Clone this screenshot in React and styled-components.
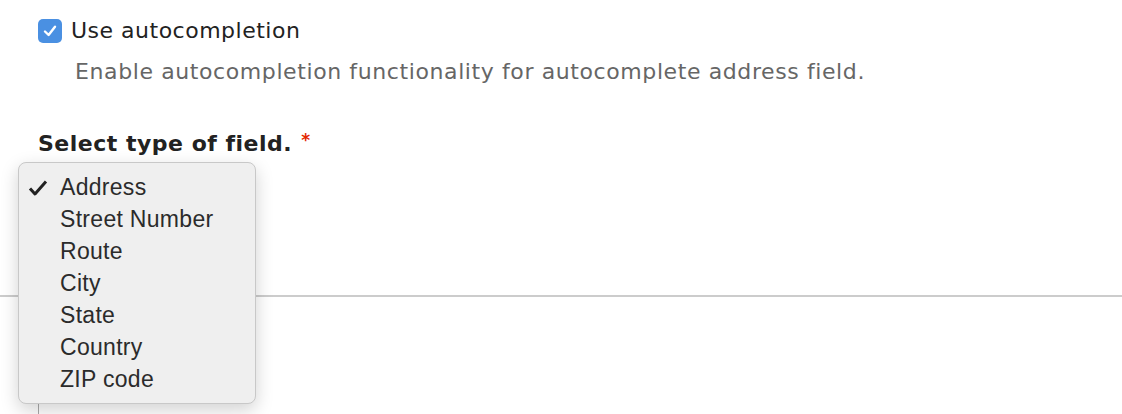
import { createGlobalStyle, styled } from 'styled-components';

const GlobalStyle = createGlobalStyle`
  html, body {
    margin: 0;
    padding: 0;
    background: #fff;
  }
  body {
    font-family: 'DejaVu Sans', 'Liberation Sans', sans-serif;
    color: #222;
  }
`;

const Page = styled.div`
  position: relative;
  width: 1122px;
  height: 414px;
  overflow: hidden;
  padding: 18px 0 0 38px;
  box-sizing: border-box;
`;

const CheckRow = styled.label`
  display: flex;
  align-items: center;
  gap: 9px;
  font-size: 22px;
  letter-spacing: 0.5px;
  line-height: 25px;
  color: #222;
`;

const CheckBox = styled.span`
  width: 24px;
  height: 24px;
  border-radius: 5px;
  background: #4a90e2;
  display: flex;
  align-items: center;
  justify-content: center;
  flex: none;
`;

const Description = styled.p`
  margin: 17px 0 0 37px;
  font-size: 22px;
  letter-spacing: 0.6px;
  line-height: 24px;
  color: #666;
`;

const FieldLabel = styled.h4`
  margin: 42px 0 0;
  font-size: 22px;
  letter-spacing: 0.5px;
  line-height: 28px;
  font-weight: 700;
  color: #222;
`;

const Required = styled.span`
  color: #e32700;
  font-size: 17px;
  margin-left: 9px;
  vertical-align: 5px;
`;

const SelectSlot = styled.div`
  height: 137px;
`;

const Divider = styled.hr`
  margin: 0 0 0 -38px;
  border: none;
  border-top: 2px solid #ccc;
`;

const Table = styled.div`
  margin-top: 60px;
  height: 80px;
  border-left: 1px solid #aaa;
`;

const Menu = styled.ul`
  position: absolute;
  left: 18px;
  top: 162px;
  width: 238px;
  margin: 0;
  padding: 8px 0;
  list-style: none;
  box-sizing: border-box;
  background: #efefef;
  border: 1px solid #c8c8c8;
  border-radius: 8px;
  box-shadow: 0 6px 18px rgba(0, 0, 0, 0.18);
  font-family: 'Liberation Sans', Arial, sans-serif;
`;

const MenuItem = styled.li`
  position: relative;
  padding-left: 41px;
  height: 32px;
  line-height: 32px;
  font-size: 23px;
  letter-spacing: 0.3px;
  color: #2b2b2b;
`;

const Tick = styled.svg`
  position: absolute;
  left: 9px;
  top: 9px;
`;

const options = [
  'Address',
  'Street Number',
  'Route',
  'City',
  'State',
  'Country',
  'ZIP code',
];

const App = () => {
  return (
    <>
      <GlobalStyle />
      <Page>
        <CheckRow>
          <CheckBox>
            <svg width="18" height="18" viewBox="0 0 18 18">
              <path
                d="M4 9.5 L7.6 13 L14 4.8"
                fill="none"
                stroke="#fff"
                strokeWidth="2.4"
                strokeLinecap="round"
                strokeLinejoin="round"
              />
            </svg>
          </CheckBox>
          Use autocompletion
        </CheckRow>
        <Description>
          Enable autocompletion functionality for autocomplete address field.
        </Description>
        <FieldLabel>
          Select type of field.
          <Required>*</Required>
        </FieldLabel>
        <SelectSlot />
        <Divider />
        <Table />
        <Menu>
          {options.map((v, i) => (
            <MenuItem key={v}>
              {i === 0 && (
                <Tick width="20" height="16" viewBox="0 0 20 16">
                  <path
                    d="M2 8.5 L7 14 L18 1.5"
                    fill="none"
                    stroke="#222"
                    strokeWidth="3"
                    strokeLinejoin="round"
                  />
                </Tick>
              )}
              {v}
            </MenuItem>
          ))}
        </Menu>
      </Page>
    </>
  );
};

export default App;
